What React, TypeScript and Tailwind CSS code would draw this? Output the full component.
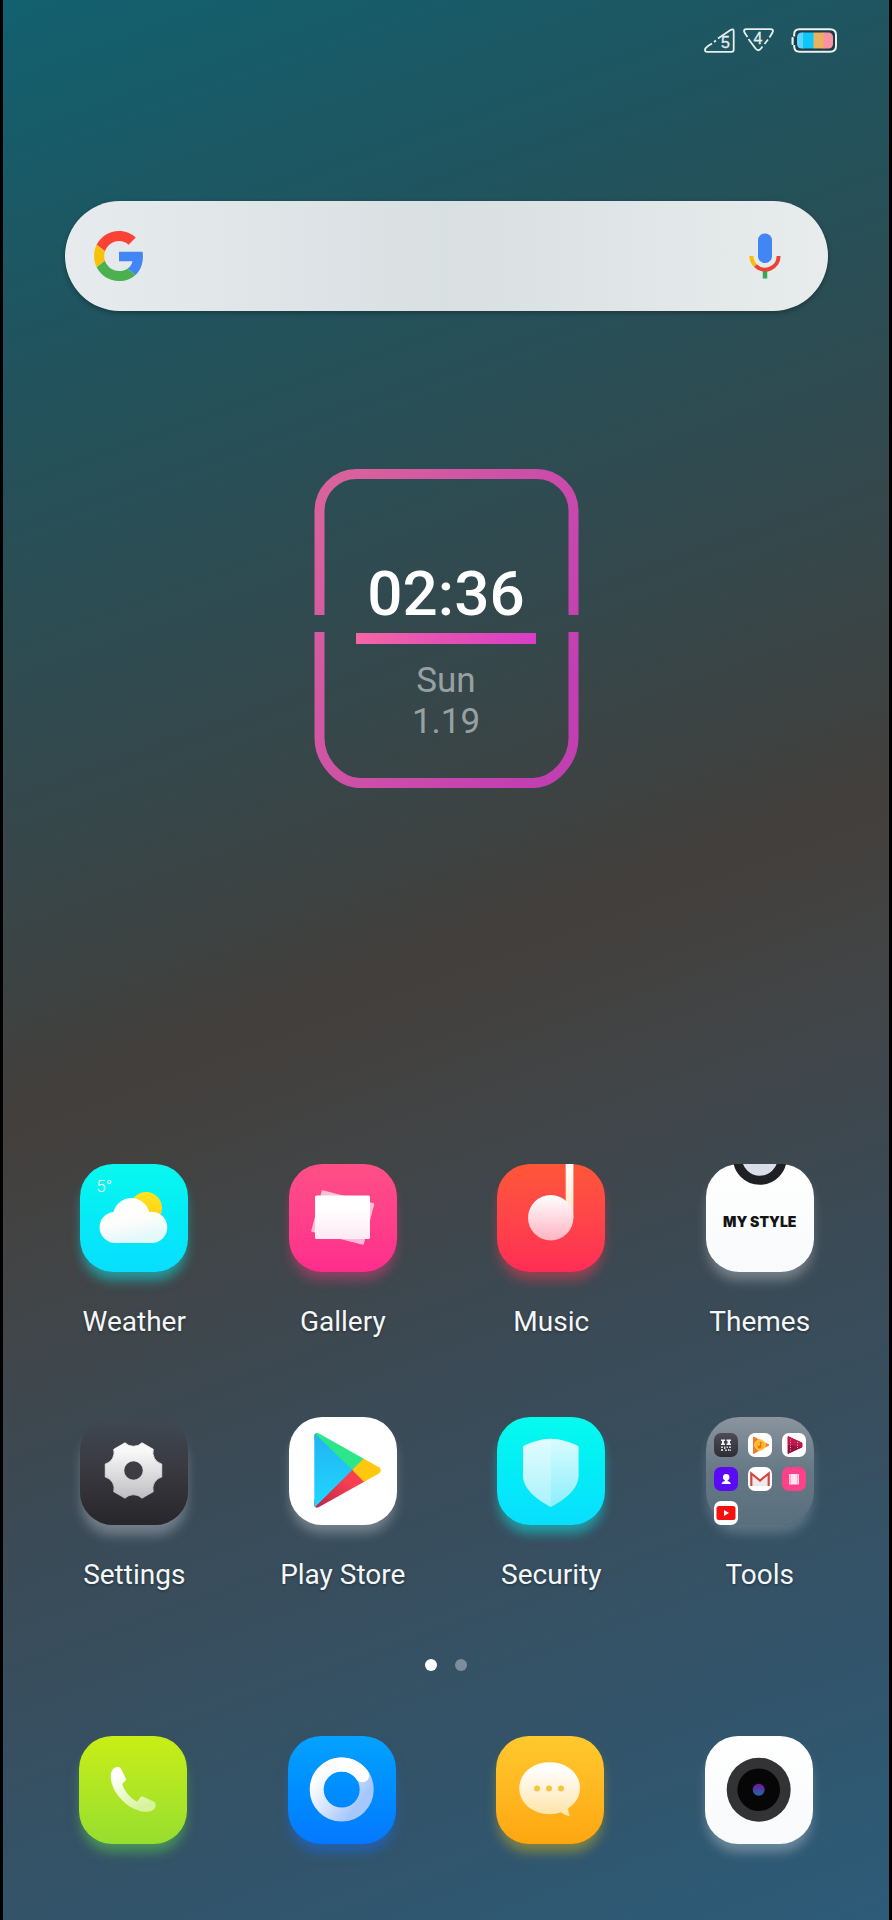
import type { ReactNode } from "react";

type AppItem = { name: string; tile: string; art: ReactNode };

function Art({ children }: { children: ReactNode }) {
  return (
    <svg viewBox="0 0 108 108" className="block size-full" aria-hidden="true">
      {children}
    </svg>
  );
}

function gearPath(cx: number, cy: number, r: number) {
  const at = (deg: number) => {
    const a = (deg * Math.PI) / 180;
    return `${(cx + r * Math.cos(a)).toFixed(2)} ${(cy + r * Math.sin(a)).toFixed(2)}`;
  };
  let d = `M${at(-13)}`;
  for (let i = 0; i < 6; i++) {
    const base = i * 60;
    d += `L${at(base + 13)}A12 12 0 0 0 ${at(base + 47)}`;
  }
  return d + "Z";
}

const weatherArt = (
  <>
    <Art>
      <defs>
        <linearGradient id="cloud" x1="0" y1="0" x2="0.3" y2="1">
          <stop offset="0" stopColor="#ffffff" />
          <stop offset="0.6" stopColor="#fdfdfb" />
          <stop offset="1" stopColor="#e2f8fb" />
        </linearGradient>
        <linearGradient id="sun" x1="0" y1="0" x2="0" y2="1">
          <stop offset="0" stopColor="#ffe51c" />
          <stop offset="1" stopColor="#ffc91a" />
        </linearGradient>
      </defs>
      <circle cx="66" cy="44" r="16" fill="url(#sun)" />
      <path
        d="M35.3 79A15.6 15.6 0 0 1 33.4 47.9A18.5 18.5 0 0 1 69.2 48A15.6 15.6 0 1 1 71.8 79Z"
        fill="url(#cloud)"
      />
    </Art>
    <span className="absolute left-4 top-3 text-[17px] leading-5 font-light text-white">5°</span>
  </>
);

const galleryArt = (
  <Art>
    <defs>
      <linearGradient id="photo" x1="0" y1="0" x2="0" y2="1">
        <stop offset="0.3" stopColor="#ffffff" />
        <stop offset="1" stopColor="#ffe9f4" />
      </linearGradient>
    </defs>
    <path
      d="M33.5 27L84.5 40L74 80L23 67Z"
      fill="#fff"
      stroke="#fff"
      strokeWidth="1.5"
      strokeLinejoin="round"
      opacity="0.65"
    />
    <rect x="26" y="31.5" width="55" height="43.5" rx="1.5" fill="url(#photo)" />
  </Art>
);

const musicArt = (
  <Art>
    <defs>
      <linearGradient id="note" x1="0" y1="0" x2="0" y2="1">
        <stop offset="0" stopColor="#ffffff" />
        <stop offset="1" stopColor="#ffb3c2" />
      </linearGradient>
      <linearGradient id="stem" x1="0" y1="0" x2="0" y2="1">
        <stop offset="0" stopColor="#ffffff" />
        <stop offset="0.6" stopColor="#fff0d8" />
        <stop offset="1" stopColor="#ffd9d8" />
      </linearGradient>
    </defs>
    <rect x="68.7" y="0" width="7.7" height="54" fill="url(#stem)" />
    <circle cx="53.7" cy="53.7" r="22.7" fill="url(#note)" />
  </Art>
);

const themesArt = (
  <>
    <Art>
      <circle cx="53.8" cy="-6" r="22.3" fill="#d9dee8" stroke="#1f2024" strokeWidth="9" />
    </Art>
    <span className="absolute inset-0 flex items-center justify-center pt-2 font-['Inter',sans-serif] text-[14px] leading-4 font-black whitespace-nowrap text-[#141414]">
      MY STYLE
    </span>
  </>
);

const settingsArt = (
  <Art>
    <defs>
      <linearGradient id="gear" x1="0" y1="0" x2="0" y2="1">
        <stop offset="0.15" stopColor="#f8f8f9" />
        <stop offset="1" stopColor="#bfbfc3" />
      </linearGradient>
    </defs>
    <path
      d={gearPath(53.5, 53.5, 29)}
      fill="url(#gear)"
      stroke="url(#gear)"
      strokeWidth="0.8"
      strokeLinejoin="round"
    />
    <circle cx="53.5" cy="53.5" r="9.3" fill="#3e3d43" />
  </Art>
);

const playArt = (
  <Art>
    <defs>
      <clipPath id="play-shape">
        <path d="M25.3 18.5Q25.8 14.3 30 16.4L90 50.2Q93.6 53.3 90 56.6L30 90Q25.8 92 25.3 88Z" />
      </clipPath>
      <linearGradient id="play-blue" x1="0" y1="0" x2="0" y2="1">
        <stop offset="0" stopColor="#22b2f4" />
        <stop offset="1" stopColor="#1fd9fd" />
      </linearGradient>
      <linearGradient id="play-red" x1="1" y1="0" x2="0" y2="1">
        <stop offset="0.3" stopColor="#f83f50" />
        <stop offset="1" stopColor="#b3214b" />
      </linearGradient>
    </defs>
    <g clipPath="url(#play-shape)">
      <path d="M22 10H84L76 41L63 54L22 20Z" fill="#2ee68a" />
      <path d="M22 95V85L63 52L76 65L74 95Z" fill="url(#play-red)" />
      <path d="M24 14.500L63.3 53L24 92Z" fill="url(#play-blue)" />
      <path d="M63.3 53L76 40.300L96 45V62L76 66Z" fill="#ffc70d" />
    </g>
  </Art>
);

const securityArt = (
  <Art>
    <defs>
      <linearGradient id="shield" x1="0" y1="0" x2="0" y2="1">
        <stop offset="0" stopColor="#d8fcff" />
        <stop offset="1" stopColor="#8ceefc" />
      </linearGradient>
    </defs>
    <path
      d="M53.8 21.7C45 21.7 34 25 26.8 28.8Q26 29.3 26 30.4V58C26 73 41 83 53.8 90C66.6 83 81.6 73 81.6 58V30.4Q81.6 29.3 80.8 28.8C73.6 25 62.6 21.7 53.8 21.7Z"
      fill="url(#shield)"
    />
    <path
      d="M53.8 21.7C45 21.7 34 25 26.8 28.8Q26 29.3 26 30.4V58C26 73 41 83 53.8 90Z"
      fill="#fff"
      opacity="0.25"
    />
  </Art>
);

const toolsArt = (
  <Art>
    <defs>
      <linearGradient id="mini-dark" x1="0" y1="0" x2="0" y2="1">
        <stop offset="0" stopColor="#4b4c55" />
        <stop offset="1" stopColor="#2d2e35" />
      </linearGradient>
    </defs>
    <rect x="8" y="16" width="24" height="24" rx="7" fill="url(#mini-dark)" />
    <g fill="#f1f1f3">
      <path d="M15 22.5H19V24H18V26.5H19V28H15V26.5H16V24H15ZM20.5 22.5H25V24H24V26.5H25V28H20.5V26.5H21.5V24H20.5Z" />
      <path
        d="M15 29.5H17V31H15ZM18 29.5H19.5V32H18ZM20.5 29.5H22V31H20.5ZM23 29.5H25V31H23ZM15 32H17V34H15ZM19 32.5H21V34H19ZM22 32H23.5V34H22ZM24 32.5H25V34H24Z"
        opacity="0.8"
      />
    </g>

    <rect x="42" y="16" width="24" height="24" rx="7" fill="#fff" />
    <path d="M47.5 20L63 28L47.5 36.5Z" fill="#f4772b" stroke="#f4772b" strokeLinejoin="round" />
    <circle cx="54" cy="28" r="5.3" fill="#fbb72d" stroke="#ffd04a" strokeWidth="1" />
    <path d="M54.6 25V30" stroke="#f06a22" strokeWidth="1.3" />
    <circle cx="53.4" cy="30" r="1.5" fill="#f06a22" />

    <rect x="76" y="16" width="24" height="24" rx="7" fill="#fff" />
    <path d="M82 19.5L96 26V30L82 36.5Z" fill="#c1174a" stroke="#c1174a" strokeLinejoin="round" />
    <path d="M82 28V36.5L96 30Z" fill="#8f1340" />
    <path d="M84.5 22.5V34M91.5 25V31.5" stroke="#f3a1b8" strokeWidth="1" strokeDasharray="1 1.5" />

    <rect x="8" y="50" width="24" height="24" rx="7" fill="#5a0af5" />
    <circle cx="20.2" cy="60.2" r="3.2" fill="#fff" />
    <path d="M15.5 67Q16 64.5 18.8 64V62H21.6V64Q24.4 64.5 25 67Z" fill="#fff" />

    <rect x="42" y="50" width="24" height="24" rx="7" fill="#fff" />
    <path d="M46 57L54 63.5L62 57V69H46Z" fill="#eceaea" />
    <path d="M45.3 69V56.5L54 63.5L62.7 56.5V69" fill="none" stroke="#d5483f" strokeWidth="2.2" />

    <rect x="76" y="50" width="24" height="24" rx="7" fill="#ff4189" />
    <rect x="83" y="57" width="10" height="10.5" fill="#ffe4ef" />
    <path
      d="M84.3 57.5V67.5M91.7 57.5V67.5"
      stroke="#ff4189"
      strokeWidth="0.9"
      strokeDasharray="1 1"
    />

    <rect x="8" y="84" width="24" height="24" rx="7" fill="#fff" />
    <rect x="10.5" y="89" width="19" height="14" rx="2.5" fill="#f5110f" />
    <path d="M18 93L23 96L18 99Z" fill="#fff" />
  </Art>
);

const phoneArt = (
  <Art>
    <defs>
      <linearGradient id="handset" x1="0" y1="0" x2="0.5" y2="1">
        <stop offset="0.2" stopColor="#ffffff" />
        <stop offset="1" stopColor="#d8f39d" />
      </linearGradient>
    </defs>
    <path
      d="M36 31.5C38.5 30.5 41.3 30.8 42.3 33L46.8 42.5Q47.3 44 46.2 45L43.2 48C45.5 55 50.5 61.5 58 65.7L61.8 61Q63 60 64.3 60.7L74.5 65.5C77 66.800 77 69 76.300 71.300C75 75 69.500 76.300 64.500 75.700C46 73 31.600 54 31.700 40C31.800 36 33.300 32.800 36 31.500Z"
      fill="url(#handset)"
    />
  </Art>
);

const browserArt = (
  <Art>
    <defs>
      <linearGradient id="ring" x1="0.1" y1="0.1" x2="0.9" y2="0.7">
        <stop offset="0" stopColor="#ffffff" />
        <stop offset="0.4" stopColor="#dfeafd" />
        <stop offset="1" stopColor="#a6c7fb" />
      </linearGradient>
      <linearGradient id="ring-tip" x1="0" y1="0" x2="1" y2="0">
        <stop offset="0" stopColor="#ffffff" stopOpacity="0" />
        <stop offset="0.5" stopColor="#ffffff" />
      </linearGradient>
    </defs>
    <circle cx="53.7" cy="53.5" r="25" fill="none" stroke="url(#ring)" strokeWidth="14" />
    <path d="M32 41A25 25 0 0 1 74 39" fill="none" stroke="url(#ring-tip)" strokeWidth="14" />
    <circle cx="74.3" cy="39.4" r="6.9" fill="#fff" />
  </Art>
);

const messagesArt = (
  <Art>
    <defs>
      <linearGradient id="bubble" x1="0" y1="0" x2="0" y2="1">
        <stop offset="0.1" stopColor="#ffffff" />
        <stop offset="1" stopColor="#ffe3a6" />
      </linearGradient>
    </defs>
    <path
      d="M53.7 26.3C71 26.3 84 37.5 84 52C84 60.5 79.5 67.5 72 72.5Q72 76 74 80.2Q68.5 79.5 65 76.3C61.5 77.6 57.5 78.2 53.7 78.2C36.5 78.2 23.3 66.8 23.3 52.3C23.3 37.5 36.5 26.3 53.7 26.3Z"
      fill="url(#bubble)"
    />
    <g fill="#f6c540">
      <circle cx="41" cy="52.5" r="3" />
      <circle cx="53" cy="52.5" r="3" />
      <circle cx="65" cy="52.5" r="3" />
    </g>
  </Art>
);

const cameraArt = (
  <Art>
    <defs>
      <linearGradient id="lens" x1="0" y1="0" x2="0" y2="1">
        <stop offset="0.15" stopColor="#6a1fa0" />
        <stop offset="0.9" stopColor="#2763a6" />
      </linearGradient>
    </defs>
    <circle cx="53.7" cy="53.7" r="32" fill="#333335" />
    <circle cx="53.7" cy="53.7" r="21.3" fill="#060607" />
    <circle cx="53.7" cy="53.7" r="6" fill="url(#lens)" />
  </Art>
);

const apps: AppItem[] = [
  {
    name: "Weather",
    tile: "bg-linear-to-b from-[#08f8ee] to-[#08defe] shadow-[0_10px_12px_-2px_rgba(16,225,230,0.55)]",
    art: weatherArt,
  },
  {
    name: "Gallery",
    tile: "bg-linear-to-b from-[#ff4f86] to-[#ff2d8c] shadow-[0_10px_12px_-2px_rgba(255,60,130,0.4)]",
    art: galleryArt,
  },
  {
    name: "Music",
    tile: "bg-linear-to-b from-[#ff5638] to-[#ff2d55] shadow-[0_10px_12px_-2px_rgba(255,60,80,0.45)]",
    art: musicArt,
  },
  {
    name: "Themes",
    tile: "bg-linear-to-b from-white to-[#f8fafb] shadow-[0_10px_12px_-2px_rgba(255,255,255,0.3)]",
    art: themesArt,
  },
  {
    name: "Settings",
    tile: "bg-linear-to-b from-[#4a4652]/20 via-[#3b3a41] via-45% to-[#27272b] shadow-[0_12px_12px_-2px_rgba(200,205,215,0.4)]",
    art: settingsArt,
  },
  {
    name: "Play Store",
    tile: "bg-white shadow-[0_10px_12px_-2px_rgba(255,255,255,0.3)]",
    art: playArt,
  },
  {
    name: "Security",
    tile: "bg-linear-to-b from-[#06fbee] to-[#08defe] shadow-[0_10px_12px_-2px_rgba(16,225,230,0.55)]",
    art: securityArt,
  },
  {
    name: "Tools",
    tile: "bg-linear-to-b from-[#8a959e] via-[#667885] to-[#596f7e] shadow-[0_10px_12px_-2px_rgba(190,205,220,0.3)]",
    art: toolsArt,
  },
];

const dock: AppItem[] = [
  {
    name: "Phone",
    tile: "bg-linear-to-b from-[#c8ee14] to-[#96de2e] shadow-[0_10px_12px_-2px_rgba(90,200,80,0.55)]",
    art: phoneArt,
  },
  {
    name: "Browser",
    tile: "bg-linear-to-b from-[#06a2ff] to-[#0678ff] shadow-[0_10px_12px_-2px_rgba(20,110,240,0.5)]",
    art: browserArt,
  },
  {
    name: "Messages",
    tile: "bg-linear-to-b from-[#ffc92e] to-[#ffa60e] shadow-[0_10px_12px_-2px_rgba(190,170,40,0.55)]",
    art: messagesArt,
  },
  {
    name: "Camera",
    tile: "bg-linear-to-b from-white to-[#f8fafb] shadow-[0_10px_12px_-2px_rgba(255,255,255,0.3)]",
    art: cameraArt,
  },
];

function Tile({ item }: { item: AppItem }) {
  return <span className={`relative block size-[108px] rounded-[33px] ${item.tile}`}>{item.art}</span>;
}

function StatusBar() {
  return (
    <header className="flex h-20 items-center justify-end pr-[51px]">
      <svg
        width="31"
        height="25"
        viewBox="0 0 31 25"
        fill="none"
        stroke="#e6eef0"
        strokeWidth="1.8"
        role="img"
        aria-label="Mobile signal"
      >
        <path d="M8 15.5L4 18Q1 20 1 22Q1 23.8 3 23.8H27.5Q29.7 23.8 29.7 21.5V3.5Q29.7 0 26.5 2L14 10.5" />
        <path d="M10 14L12 12.6" />
        <text
          x="17"
          y="20"
          fill="#e6eef0"
          stroke="#e6eef0"
          strokeWidth="0.3"
          fontSize="16"
          className="font-['Liberation_Sans',sans-serif]"
        >
          5
        </text>
      </svg>
      <svg
        width="31"
        height="25"
        viewBox="0 0 31 25"
        fill="none"
        stroke="#e6eef0"
        strokeWidth="1.8"
        className="ml-2"
        role="img"
        aria-label="Wi-Fi"
      >
        <path d="M4.5 9L1.5 4.5Q0 1.2 3.5 1.2H27.5Q31 1.2 29.5 4.5L26.5 9.5" />
        <path d="M5.500 11L12.500 20.500Q15.500 24 18 20.500L19.500 18.500M21.500 16L25 11.500" />
        <text
          x="10.5"
          y="16"
          fill="#e6eef0"
          stroke="#e6eef0"
          strokeWidth="0.3"
          fontSize="16"
          className="font-['Liberation_Sans',sans-serif]"
        >
          4
        </text>
      </svg>
      <svg width="48" height="25" viewBox="0 0 48 25" className="ml-4" role="img" aria-label="Battery">
        <defs>
          <clipPath id="cells">
            <rect x="7" y="4.5" width="36" height="16" rx="4.5" />
          </clipPath>
        </defs>
        <path
          d="M4.2 8.5V6.5Q4.2 1.3 9.5 1.3H40Q46 1.3 46 7V18Q46 23.7 40 23.7H9.5Q4.2 23.7 4.2 18.5V17"
          fill="#1b3b45"
          stroke="#e9f1f2"
          strokeWidth="2"
        />
        <rect x="1.5" y="9" width="2.2" height="8" rx="1" fill="#e9f1f2" />
        <g clipPath="url(#cells)">
          <rect x="6" y="4" width="8" height="17" fill="#5cd3fb" />
          <rect x="13" y="4" width="11" height="17" fill="#0cc6fc" />
          <rect x="23.5" y="4" width="11" height="17" fill="#e8b25f" />
          <rect x="33.5" y="4" width="11" height="17" fill="#fb92a4" />
        </g>
      </svg>
    </header>
  );
}

function SearchBar() {
  return (
    <form
      role="search"
      onSubmit={(e) => e.preventDefault()}
      className="mt-[121px] mr-[61px] ml-[62px] flex h-[110px] items-center rounded-full bg-linear-to-r from-[#e7ebee] via-[#d9e0e2] to-[#e8eced] pr-[47px] pl-[29px] shadow-[0_2px_5px_rgba(0,0,0,0.3)]"
    >
      <button type="submit" aria-label="Search with Google">
        <svg width="50" height="50" viewBox="0 0 48 48" aria-hidden="true">
          <path
            fill="#fb4335"
            d="M24 9.5c3.54 0 6.71 1.22 9.21 3.6l6.85-6.85C35.9 2.38 30.47 0 24 0 14.62 0 6.51 5.38 2.56 13.22l7.98 6.19C12.43 13.72 17.74 9.5 24 9.5z"
          />
          <path
            fill="#4285f4"
            d="M46.98 24.55c0-1.57-.15-3.09-.38-4.55H24v9.02h12.94c-.58 2.96-2.26 5.48-4.78 7.18l7.73 6c4.51-4.18 7.09-10.36 7.09-17.65z"
          />
          <path
            fill="#f8c20a"
            d="M10.53 28.59c-.48-1.45-.76-2.99-.76-4.59s.27-3.14.76-4.59l-7.98-6.19C.92 16.46 0 20.12 0 24c0 3.88.92 7.54 2.56 10.78l7.97-6.19z"
          />
          <path
            fill="#4bb04f"
            d="M24 48c6.48 0 11.93-2.13 15.89-5.81l-7.73-6c-2.15 1.45-4.92 2.3-8.16 2.3-6.26 0-11.57-4.22-13.47-9.91l-7.98 6.19C6.51 42.62 14.62 48 24 48z"
          />
        </svg>
      </button>
      <input
        type="text"
        aria-label="Search"
        className="mx-4 h-16 min-w-0 flex-1 bg-transparent text-[28px] text-gray-800 outline-none"
      />
      <button type="button" aria-label="Voice search">
        <svg width="32" height="46" viewBox="0 0 32 46" fill="none" aria-hidden="true">
          <rect x="9" y="0.5" width="14" height="29.500" rx="6.8" fill="#4285f4" />
          <path d="M16 38V45.5" stroke="#34a853" strokeWidth="4.5" />
          <path d="M2.4 23A13.6 13.6 0 0 0 6.4 32.6" stroke="#fbbc05" strokeWidth="4" />
          <path d="M6.4 32.6A13.6 13.6 0 0 0 29.6 23" stroke="#ea4335" strokeWidth="4" />
        </svg>
      </button>
    </form>
  );
}

function ClockWidget() {
  return (
    <section
      aria-label="Clock"
      className="relative mx-auto mt-[158px] flex h-[319px] w-[265px] flex-col items-center pt-[88px]"
    >
      <svg viewBox="0 0 265 319" fill="none" className="absolute inset-0 size-full" aria-hidden="true">
        <defs>
          <linearGradient id="frame" x1="0" y1="60" x2="265" y2="200" gradientUnits="userSpaceOnUse">
            <stop offset="0" stopColor="#d9629c" />
            <stop offset="1" stopColor="#c23fb2" />
          </linearGradient>
        </defs>
        <g stroke="url(#frame)" strokeWidth="10">
          <path d="M5.5 146V42A37 37 0 0 1 42.5 5H222.5A37 37 0 0 1 259.5 42V146" />
          <path d="M5.5 163V269C5.5 292 25 314 46 314H219C240 314 259.5 292 259.5 269V163" />
        </g>
      </svg>
      <time className="text-[62px] leading-[74px] font-medium text-white">02:36</time>
      <div className="mt-[2px] h-[11px] w-[180px] bg-linear-to-r from-[#f466a5] via-[#e450b4] to-[#d93dc6]" />
      <p className="mt-4 text-center text-[35px] leading-[41px] text-[#97a1a2]">
        Sun
        <br />
        1.19
      </p>
    </section>
  );
}

export default function App() {
  return (
    <div className="min-h-screen bg-black px-[3px] font-['Roboto',sans-serif]">
      <main className="flex min-h-screen flex-col bg-[linear-gradient(160deg,#12606f_0%,#24515a_20%,#34484c_36%,#433f3c_50%,#424445_57%,#3b4a55_68%,#374f60_78%,#2f5872_94%,#2d5b78_100%)]">
        <StatusBar />
        <SearchBar />
        <ClockWidget />

        <nav aria-label="Apps" className="mt-auto grid grid-cols-4 gap-y-[77px] pt-16 pr-[25px] pl-[27px]">
          {apps.map((item) => (
            <button key={item.name} type="button" className="flex flex-col items-center">
              <Tile item={item} />
              <span className="mt-8 text-[28px] leading-9 whitespace-nowrap text-[#f4f7f8] [text-shadow:0_1px_3px_rgba(0,0,0,0.4)]">
                {item.name}
              </span>
            </button>
          ))}
        </nav>

        <div className="mt-[66px] flex justify-center gap-[18px]">
          <button type="button" aria-label="Page 1" aria-current="page" className="size-3 rounded-full bg-white" />
          <button type="button" aria-label="Page 2" className="size-3 rounded-full bg-white/35" />
        </div>

        <nav aria-label="Dock" className="mt-[65px] mb-[76px] grid grid-cols-4 px-[26px]">
          {dock.map((item) => (
            <button key={item.name} type="button" aria-label={item.name} className="flex justify-center">
              <Tile item={item} />
            </button>
          ))}
        </nav>
      </main>
    </div>
  );
}
